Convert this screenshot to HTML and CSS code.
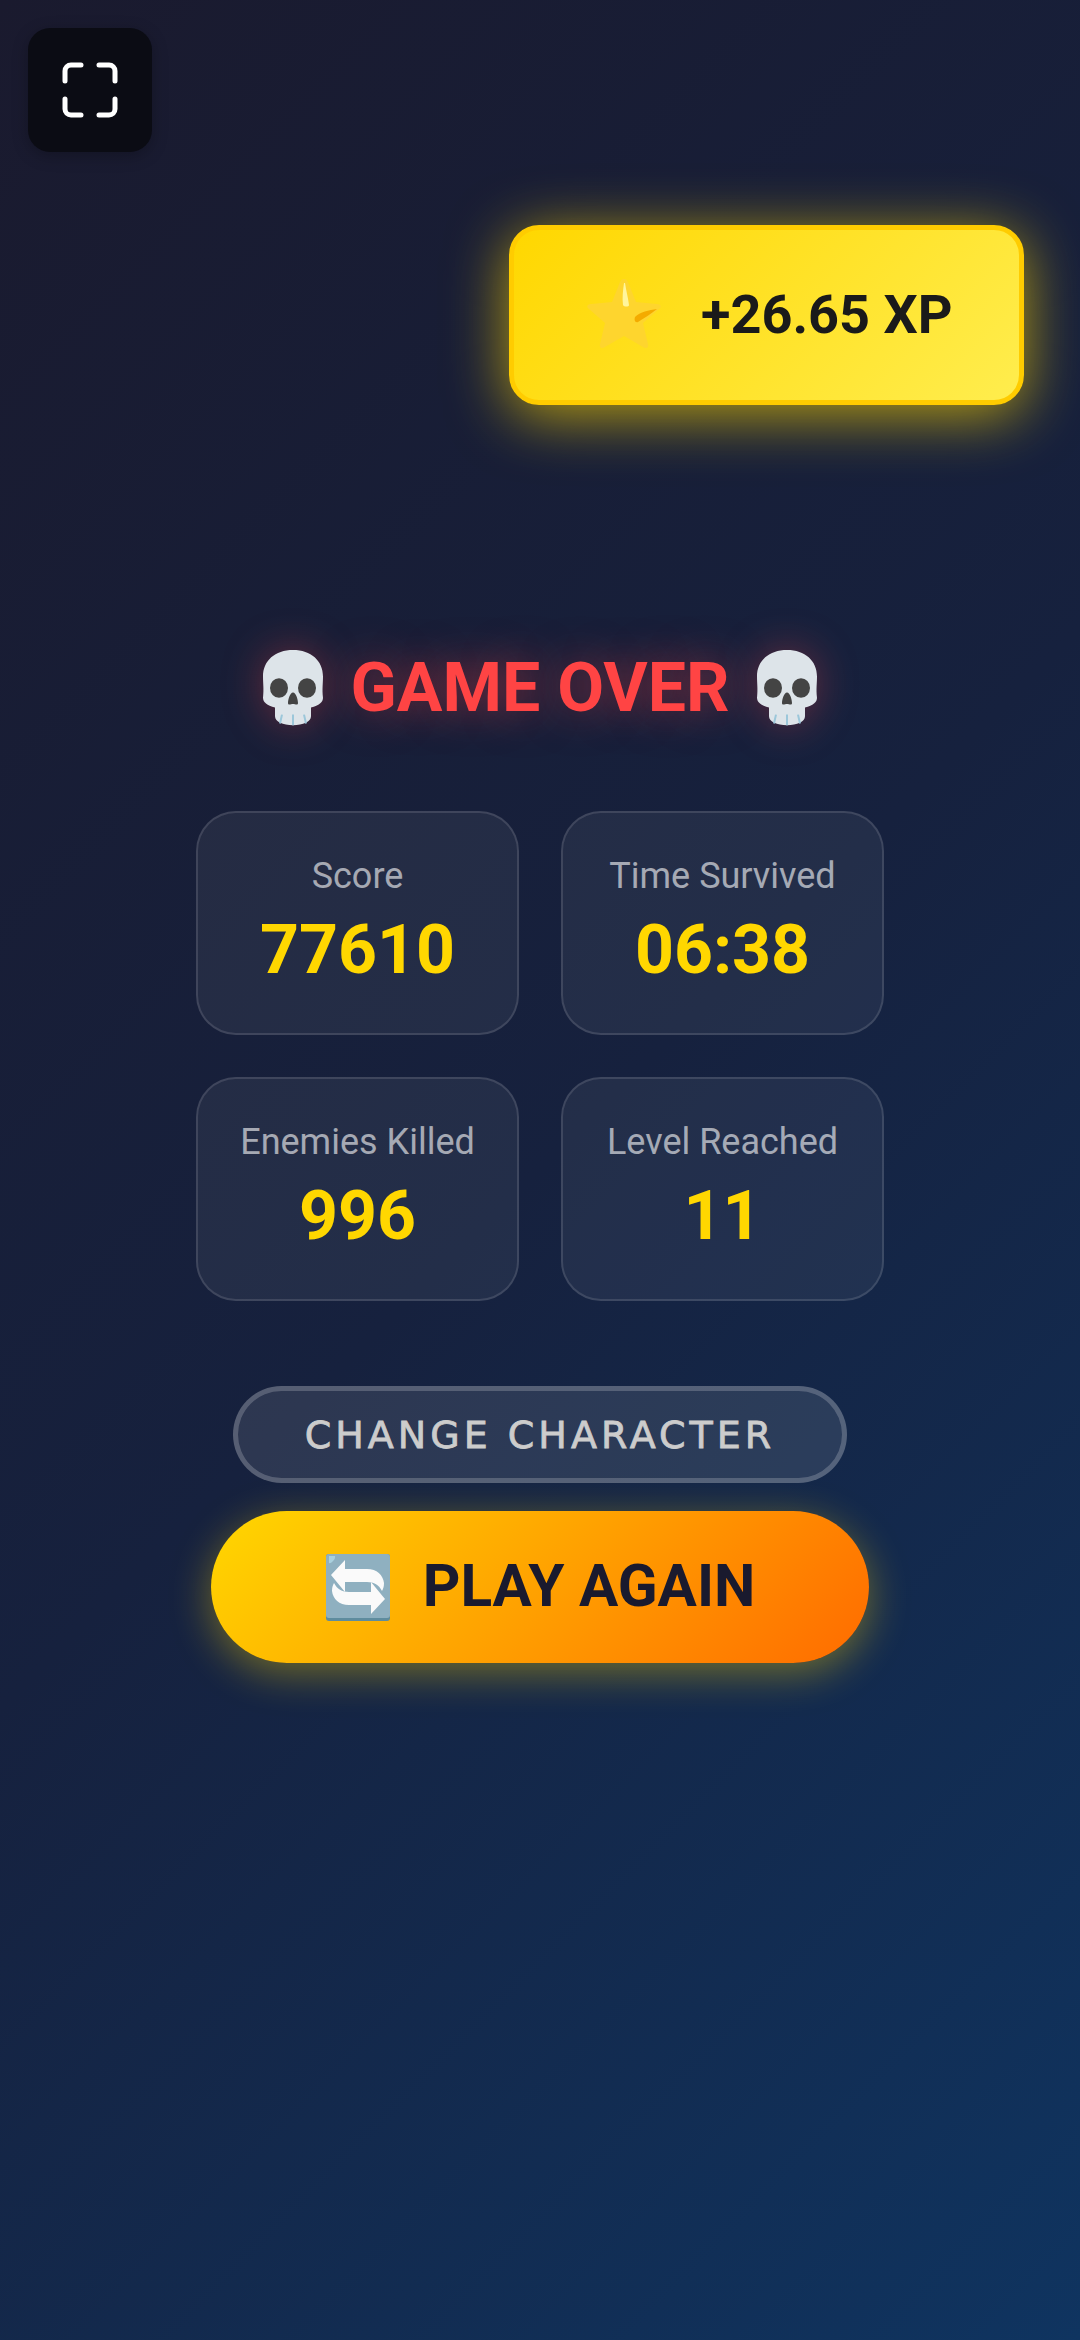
FILE: index.html
```html
<!DOCTYPE html>
<html lang="en">
<head>
    <meta charset="UTF-8">
    <meta name="viewport" content="width=device-width, initial-scale=1.0">
    <title>Game Over</title>
    <link rel="stylesheet" href="styles.css">
</head>
<body>

    <button class="fullscreen-btn" aria-label="Fullscreen">
        <svg viewBox="0 0 56 56" width="56" height="56" fill="none" stroke="#fff" stroke-width="5" stroke-linecap="round">
            <path d="M3 19V9a6 6 0 0 1 6-6h10"/>
            <path d="M37 3h10a6 6 0 0 1 6 6v10"/>
            <path d="M53 37v10a6 6 0 0 1-6 6H37"/>
            <path d="M19 53H9a6 6 0 0 1-6-6V37"/>
        </svg>
    </button>

    <div class="xp-toast">
        <svg class="star" viewBox="0 0 74 72" width="74" height="72">
            <path d="M37 1c2 0 3 1 4 3l8 20 21 2c4 0 5 3 2 5L56 45l5 21c1 4-2 5-5 3L37 58 18 69c-3 2-6 1-5-3l5-21L2 31c-3-2-2-5 2-5l21-2 8-20c1-2 2-3 4-3z" fill="#fed52e"/>
            <path d="M38 5c1 7 3 14 4 22 0 2-5 2-6 0-1-7 0-15 1-22z" fill="#fff59d"/>
            <path d="M70 31c-6 5-13 9-19 13-3 1-4-2-3-5 5-5 14-7 22-8z" fill="#f4ab00"/>
        </svg>
        <span class="xp-text">+26.65 XP</span>
    </div>

    <div class="container">
        <h1 class="title">
            <svg class="skull" viewBox="0 0 62 88" width="62" height="78" preserveAspectRatio="none"><use href="#skull"/></svg>
            <span>GAME OVER</span>
            <svg class="skull" viewBox="0 0 62 88" width="62" height="78" preserveAspectRatio="none"><use href="#skull"/></svg>
        </h1>

        <div class="stats">
            <div class="stat-card">
                <div class="stat-label">Score</div>
                <div class="stat-value">77610</div>
            </div>
            <div class="stat-card">
                <div class="stat-label">Time Survived</div>
                <div class="stat-value">06:38</div>
            </div>
            <div class="stat-card">
                <div class="stat-label">Enemies Killed</div>
                <div class="stat-value">996</div>
            </div>
            <div class="stat-card">
                <div class="stat-label">Level Reached</div>
                <div class="stat-value">11</div>
            </div>
        </div>

        <button class="change-btn">CHANGE CHARACTER</button>

        <button class="play-btn">
            <svg viewBox="0 0 66 88" width="66" height="88">
                <rect x="1" y="11" width="64" height="67" rx="3" fill="#5f8c9e"/>
                <rect x="1" y="11" width="64" height="64" rx="3" fill="#8fb0c0"/>
                <path d="M4 13h6c1 3-4 8-6 7z" fill="#a9d0de"/>
                <path d="M20 17v9h22c10 0 16 6 17 14 0 4-1 6-2 8-3-6-8-9-15-9H20v10L6 32z" fill="#fafafa"/>
                <path d="M46 71v-9H24C14 62 8 56 7 48c0-4 1-6 2-8 3 6 8 9 15 9h22V39l14 17z" fill="#fafafa"/>
            </svg>
            <span class="play-text">PLAY AGAIN</span>
        </button>
    </div>

    <!-- skull emoji, used twice in the title -->
    <svg class="defs" width="0" height="0">
        <defs>
            <g id="skull">
                <path d="M31 1C13 1 1 13 1 31c0 8 1 14 0 24 0 5 4 9 12 11v10c0 6 8 10 18 10s18-4 18-10V66c8-2 12-6 12-11-1-10 0-16 0-24C61 13 49 1 31 1z" fill="#dde4e9"/>
                <ellipse cx="17" cy="44" rx="9" ry="11" fill="#444"/>
                <ellipse cx="45" cy="44" rx="9" ry="11" fill="#444"/>
                <path d="M31 49c3 0 5 8 5 12 0 3-3 1-5 1s-5 2-5-1c0-4 2-12 5-12z" fill="#444"/>
                <path d="M20 74l-2 10M31 74v12M42 74l2 10" stroke="#9cc7da" stroke-width="2" fill="none"/>
            </g>
        </defs>
    </svg>

</body>
</html>
```

FILE: styles.css
```css
* {
    box-sizing: border-box;
}
html, body {
    height: 100%;
}
body {
    font-family: 'Roboto', 'Liberation Sans', sans-serif;
    background: linear-gradient(135deg, #1a1a2e 0%, #16213e 50%, #0f3460 100%);
    margin: 0;
    overflow: hidden;
}
.defs {
    display: block;
}
.fullscreen-btn {
    position: absolute;
    top: 28px;
    left: 28px;
    width: 124px;
    height: 124px;
    display: flex;
    align-items: center;
    justify-content: center;
    background: #0b0c14;
    border: none;
    border-radius: 22px;
    padding: 0;
    box-shadow: 0 4px 16px rgba(0, 0, 0, 0.25);
}
.xp-toast {
    position: absolute;
    top: 225px;
    left: 509px;
    width: 515px;
    height: 180px;
    display: flex;
    align-items: center;
    gap: 40px;
    padding: 0 0 2px 73px;
    background: linear-gradient(135deg, #ffd700, #ffed4e);
    border: 5px solid #ffcc00;
    border-radius: 30px;
    box-shadow: 0 10px 60px rgba(255, 215, 0, 0.7);
}
.xp-text {
    font-size: 54px;
    font-weight: 700;
    color: #1a1a1a;
}
.container {
    display: flex;
    flex-direction: column;
    align-items: center;
    padding-top: 640px;
}
.title {
    display: flex;
    align-items: center;
    gap: 26px;
    height: 96px;
    margin: 0 0 75px;
    font-size: 68px;
    font-weight: 700;
    color: #ff4444;
    text-shadow: 0 0 40px rgba(255, 68, 68, 0.5);
}
.skull {
    filter: drop-shadow(0 0 20px rgba(255, 68, 68, 0.35));
}
.stats {
    display: grid;
    grid-template-columns: 323px 323px;
    gap: 42px;
    margin-bottom: 85px;
}
.stat-card {
    height: 224px;
    padding-top: 42px;
    text-align: center;
    background: rgba(255, 255, 255, 0.06);
    border: 2px solid rgba(255, 255, 255, 0.12);
    border-radius: 40px;
}
.stat-label {
    font-size: 36px;
    color: rgba(255, 255, 255, 0.6);
    margin-bottom: 13px;
}
.stat-value {
    font-size: 68px;
    font-weight: 700;
    color: #ffd700;
}
.change-btn {
    width: 614px;
    height: 97px;
    margin-bottom: 28px;
    font-family: 'DejaVu Sans', sans-serif;
    font-size: 38px;
    letter-spacing: 4px;
    color: #cccccc;
    -webkit-text-stroke: 0.8px #cccccc;
    background: rgba(255, 255, 255, 0.1);
    border: 5px solid rgba(255, 255, 255, 0.2);
    border-radius: 50px;
}
.play-btn {
    width: 658px;
    height: 152px;
    display: flex;
    align-items: center;
    justify-content: center;
    gap: 32px;
    font-family: inherit;
    font-size: 58.5px;
    font-weight: 700;
    color: #1a1a2e;
    background: linear-gradient(135deg, #ffd700, #ff6b00);
    border: none;
    border-radius: 76px;
    box-shadow: 0 10px 40px rgba(255, 215, 0, 0.4);
}
.play-text {
    margin-top: -3px;
}
```
